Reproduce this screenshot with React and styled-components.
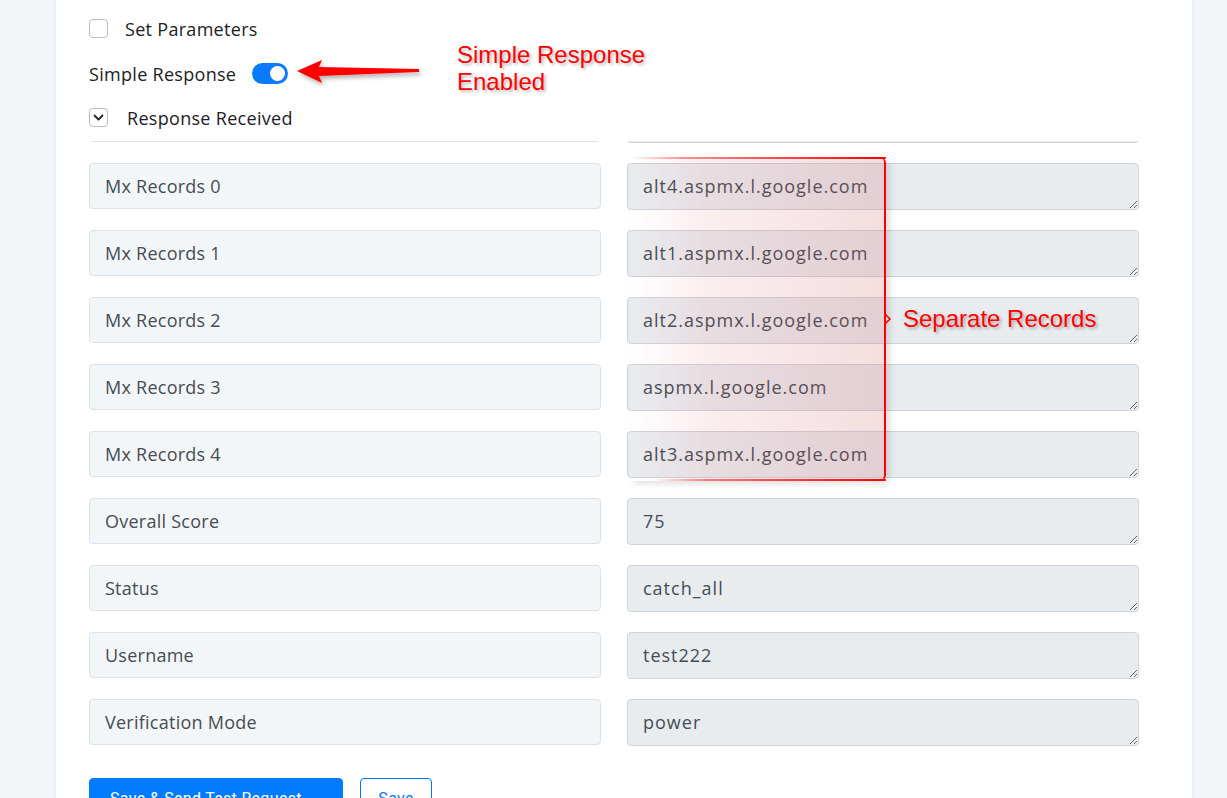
import React, { useLayoutEffect, useRef } from "react";
import styled, { createGlobalStyle } from "styled-components";

const GlobalStyle = createGlobalStyle`
  html, body {
    margin: 0;
    padding: 0;
    height: 798px;
    overflow: hidden;
    background: #f3f6f9;
    font-family: "Open Sans", Lato, sans-serif;
    color: #212529;
  }
  * { box-sizing: border-box; }
`;

const Page = styled.div`
  padding-left: 56px;
  height: 798px;
`;

const Card = styled.div`
  position: relative;
  width: 1136px;
  min-height: 900px;
  background: #ffffff;
  box-shadow: 0 0 6px rgba(30, 50, 80, 0.08);
  padding: 6px 0 0 33px;
`;

const ControlRow = styled.div`
  height: ${(p) => p.$h || 45}px;
  display: flex;
  align-items: center;
  gap: ${(p) => p.$gap || 16}px;
  font-size: 18px;
  letter-spacing: 0.3px;
  color: #1d2125;
`;

const Checkbox = styled.span`
  flex: none;
  width: 19px;
  height: 19px;
  border: 1px solid #b9bec4;
  border-radius: 4px;
  background: #fff;
  display: inline-flex;
  align-items: center;
  justify-content: center;
`;

const Toggle = styled.span`
  position: relative;
  flex: none;
  width: 36px;
  height: 21px;
  border-radius: 11px;
  background: #0a7bff;
  &::after {
    content: "";
    position: absolute;
    top: 3px;
    right: 3px;
    width: 15px;
    height: 15px;
    border-radius: 50%;
    background: #fff;
  }
`;

const Scroller = styled.div`
  margin-top: 2px;
  width: 1071px;
  height: 627px;
  overflow-y: scroll;
  &::-webkit-scrollbar {
    width: 10px;
  }
  &::-webkit-scrollbar-track {
    background: #edf5ff;
  }
  &::-webkit-scrollbar-thumb {
    background: #6c757d;
    border-radius: 5px;
  }
`;

const FieldGrid = styled.div`
  display: grid;
  grid-template-columns: 512px 512px;
  column-gap: 26px;
  row-gap: 20px;
  align-items: start;
  padding: 20px 0 22px;
`;

const KeyInput = styled.div`
  height: 46px;
  border: 1px solid #dde2e7;
  border-radius: 4px;
  background: #f3f6f9;
  padding: 0 15px;
  display: flex;
  align-items: center;
  font-size: 18px;
  letter-spacing: 0.25px;
  color: #454c53;
`;

const ValueArea = styled.textarea`
  display: block;
  width: 512px;
  height: 47px;
  resize: vertical;
  overflow: hidden;
  border: 1px solid #ced4da;
  border-radius: 4px;
  background: #e9ecef;
  padding: 9px 15px;
  font-family: "Open Sans", Lato, sans-serif;
  font-size: 18px;
  letter-spacing: 1px;
  line-height: 27px;
  color: #454c53;
  outline: none;
`;

const ButtonRow = styled.div`
  margin-top: 10px;
  display: flex;
  gap: 17px;
`;

const Button = styled.button`
  height: 40px;
  padding: 0 ${(p) => (p.$primary ? 20 : 17)}px;
  border-radius: 4px;
  border: 1px solid #007bff;
  background: ${(p) => (p.$primary ? "#007bff" : "#fff")};
  color: ${(p) => (p.$primary ? "#fff" : "#007bff")};
  font-family: Roboto, sans-serif;
  font-size: 16px;
  letter-spacing: 0.3px;
`;

/* Red callout overlays */
const Note = styled.div`
  position: absolute;
  left: ${(p) => p.$x}px;
  top: ${(p) => p.$y}px;
  font-family: "Liberation Sans", Arial, sans-serif;
  font-size: 24px;
  line-height: 27px;
  color: #ff0000;
  text-shadow: 2px 2px 3px rgba(0, 0, 0, 0.28);
  white-space: nowrap;
`;

const ArrowSvg = styled.svg`
  position: absolute;
  left: 236px;
  top: 54px;
  overflow: visible;
`;

const Bracket = styled.div`
  position: absolute;
  left: 574px;
  top: 157px;
  width: 256px;
  height: 324px;
  border-right: 2px solid #ff0000;
  border-radius: 0 6px 6px 0;
  background: linear-gradient(
    to right,
    rgba(230, 70, 80, 0) 0%,
    rgba(215, 90, 100, 0.1) 30%,
    rgba(200, 90, 100, 0.2) 100%
  );
  box-shadow: 4px 3px 6px rgba(0, 0, 0, 0.12);
  &::before,
  &::after {
    content: "";
    position: absolute;
    left: 0;
    right: -2px;
    height: 2px;
    border-radius: 0 4px 4px 0;
    background: linear-gradient(to right, rgba(255, 0, 0, 0) 0%, rgba(255, 0, 0, 0.4) 20%, #ff0000 100%);
  }
  &::before { top: 0; }
  &::after {
    bottom: 0;
    background: linear-gradient(to right, rgba(255, 0, 0, 0) 10%, rgba(255, 0, 0, 0.5) 30%, #ff0000 100%);
  }
`;

const Tick = styled.svg`
  position: absolute;
  right: -8px;
  top: 156px;
`;

const hiddenKeys = [
  "Email", "User", "Domain", "Accept All", "Block", "Disposable", "Free",
  "Role", "Did You Mean", "Domain Age Days", "Smtp Provider", "Mx Found",
  "Smtp Check", "Is Valid", "Reason",
];

const rows = [
  ...hiddenKeys.map((k) => [k, k === "Email" ? "test222@gmail.com" : "false"]),
  ["Mx Records 0", "alt4.aspmx.l.google.com"],
  ["Mx Records 1", "alt1.aspmx.l.google.com"],
  ["Mx Records 2", "alt2.aspmx.l.google.com"],
  ["Mx Records 3", "aspmx.l.google.com"],
  ["Mx Records 4", "alt3.aspmx.l.google.com"],
  ["Overall Score", "75"],
  ["Status", "catch_all"],
  ["Username", "test222"],
  ["Verification Mode", "power"],
];

export default function App() {
  const scrollRef = useRef(null);
  useLayoutEffect(() => {
    const el = scrollRef.current;
    if (el) el.scrollTop = el.scrollHeight;
  }, []);

  return (
    <Page>
      <GlobalStyle />
      <Card>
        <ControlRow $gap={17}>
          <Checkbox />
          <span>Set Parameters</span>
        </ControlRow>
        <ControlRow>
          <span>Simple Response</span>
          <Toggle />
        </ControlRow>
        <ControlRow $gap={19} $h={43}>
          <Checkbox>
            <svg width="11" height="7" viewBox="0 0 11 7">
              <path d="M1.5 1.5 L5.5 5.5 L9.5 1.5" fill="none" stroke="#212529" strokeWidth="1.8" strokeLinecap="round" strokeLinejoin="round" />
            </svg>
          </Checkbox>
          <span>Response Received</span>
        </ControlRow>

        <Scroller ref={scrollRef}>
          <FieldGrid>
            {rows.map(([k, v]) => (
              <React.Fragment key={k}>
                <KeyInput>{k}</KeyInput>
                <ValueArea readOnly value={v} rows={1} />
              </React.Fragment>
            ))}
          </FieldGrid>
        </Scroller>

        <ButtonRow>
          <Button $primary>Save &amp; Send Test Request →</Button>
          <Button>Save</Button>
        </ButtonRow>

        <ArrowSvg width="130" height="32" viewBox="0 0 130 32">
          <defs>
            <filter id="arrowShadow" x="-10%" y="-40%" width="130%" height="200%">
              <feDropShadow dx="2" dy="3" stdDeviation="2" floodColor="#000" floodOpacity="0.3" />
            </filter>
          </defs>
          <polygon
            points="5,17 30,6 27,13 127,15 127,18 27,22 30,29"
            fill="#ff0000"
            filter="url(#arrowShadow)"
          />
        </ArrowSvg>
        <Note $x={401} $y={41}>
          Simple Response
          <br />
          Enabled
        </Note>

        <Bracket>
          <Tick width="8" height="12" viewBox="0 0 8 12">
            <path d="M1 1 L6 6 L1 11" fill="none" stroke="#ff0000" strokeWidth="1.6" />
          </Tick>
        </Bracket>
        <Note $x={847} $y={305}>Separate Records</Note>
      </Card>
    </Page>
  );
}
